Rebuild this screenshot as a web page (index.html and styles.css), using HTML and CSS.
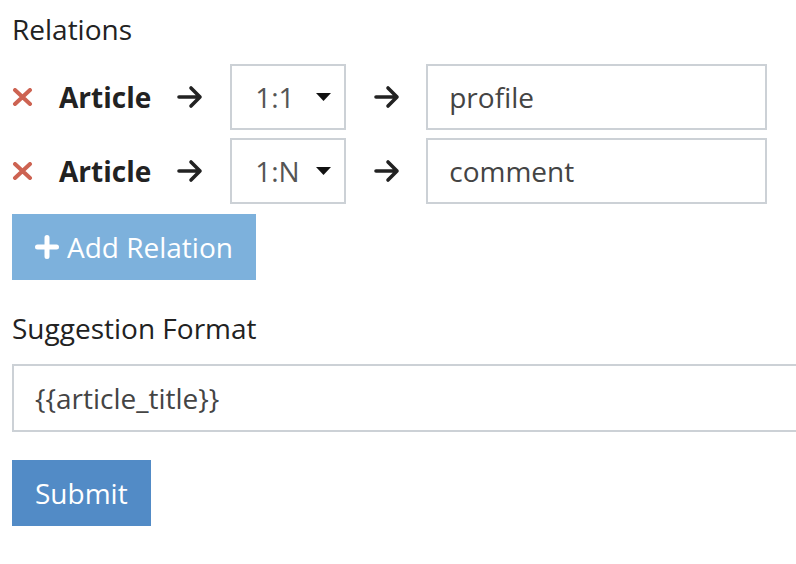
FILE: index.html
```html
<!DOCTYPE html>
<html>
<head>
<meta charset="utf-8">
<link rel="stylesheet" href="styles.css">
</head>
<body>
<div class="form">
  <div class="label first">Relations</div>
  <div class="rel-row">
    <svg class="x-icon" width="21" height="18" viewBox="0 0 21 18"><path d="M3 2 L18 16 M18 2 L3 16" stroke="#cd6352" stroke-width="4" stroke-linecap="round"/></svg>
    <span class="entity">Article</span>
    <svg class="arrow" width="26" height="24" viewBox="0 0 26 24"><path d="M2 12 H23 M14 3 L23 12 L14 21" fill="none" stroke="#222" stroke-width="3.6" stroke-linecap="round" stroke-linejoin="round"/></svg>
    <div class="select"><span>1:1</span><svg class="caret" width="15" height="8" viewBox="0 0 15 8"><polygon points="0,0 15,0 7.5,8" fill="#111"/></svg></div>
    <svg class="arrow arrow-2" width="26" height="24" viewBox="0 0 26 24"><path d="M2 12 H23 M14 3 L23 12 L14 21" fill="none" stroke="#222" stroke-width="3.6" stroke-linecap="round" stroke-linejoin="round"/></svg>
    <input class="text-input" type="text" value="profile">
  </div>
  <div class="rel-row second">
    <svg class="x-icon" width="21" height="18" viewBox="0 0 21 18"><path d="M3 2 L18 16 M18 2 L3 16" stroke="#cd6352" stroke-width="4" stroke-linecap="round"/></svg>
    <span class="entity">Article</span>
    <svg class="arrow" width="26" height="24" viewBox="0 0 26 24"><path d="M2 12 H23 M14 3 L23 12 L14 21" fill="none" stroke="#222" stroke-width="3.6" stroke-linecap="round" stroke-linejoin="round"/></svg>
    <div class="select"><span>1:N</span><svg class="caret" width="15" height="8" viewBox="0 0 15 8"><polygon points="0,0 15,0 7.5,8" fill="#111"/></svg></div>
    <svg class="arrow arrow-2" width="26" height="24" viewBox="0 0 26 24"><path d="M2 12 H23 M14 3 L23 12 L14 21" fill="none" stroke="#222" stroke-width="3.6" stroke-linecap="round" stroke-linejoin="round"/></svg>
    <input class="text-input" type="text" value="comment">
  </div>
  <button class="btn btn-add" type="button"><svg class="plus" width="24" height="24" viewBox="0 0 24 24"><path d="M12 2.5 V21.5 M2.5 12 H21.5" stroke="#fff" stroke-width="5" stroke-linecap="round"/></svg><span>Add Relation</span></button>
  <div class="label section">Suggestion Format</div>
  <input class="text-input wide" type="text" value="{{article_title}}">
  <div class="actions"><button class="btn btn-submit" type="submit">Submit</button></div>
</div>
</body>
</html>
```

FILE: styles.css
```css
html, body {
  margin: 0;
  padding: 0;
  background: #fff;
  overflow: hidden;
}
body {
  font-family: "Open Sans", "Liberation Sans", sans-serif;
  font-size: 28px;
  color: #222;
}
.form {
  padding-left: 12px;
}
.label {
  line-height: 40px;
  color: #222;
}
.label.first {
  margin-top: 9px;
  margin-bottom: 15px;
}
.label.section {
  margin-top: 28px;
  margin-bottom: 16px;
}
.rel-row {
  display: flex;
  align-items: center;
  gap: 26px;
  height: 66px;
}
.rel-row.second {
  margin-top: 8px;
}
.x-icon, .arrow {
  flex: none;
  display: block;
}
.arrow-2 {
  margin-left: 2px;
}
.entity {
  font-weight: 700;
  color: #222;
  line-height: 40px;
}
.select {
  box-sizing: border-box;
  flex: none;
  width: 116px;
  height: 66px;
  border: 2px solid #ccd1d6;
  display: flex;
  align-items: center;
  padding-left: 23px;
  color: #555;
  margin-left: 1px;
}
.select span {
  width: 61px;
}
.caret {
  display: block;
}
.text-input {
  box-sizing: border-box;
  flex: none;
  height: 66px;
  width: 341px;
  border: 2px solid #ccd1d6;
  border-radius: 0;
  padding: 0 21px;
  margin: 0;
  font-family: "Open Sans", "Liberation Sans", sans-serif;
  font-size: 28px;
  color: #444;
  background: #fff;
  outline: none;
}
.text-input.wide {
  display: block;
  width: 800px;
  height: 68px;
}
.btn {
  box-sizing: border-box;
  height: 66px;
  border: none;
  border-radius: 0;
  padding: 0 23px;
  margin: 0;
  font-family: "Open Sans", "Liberation Sans", sans-serif;
  font-size: 28px;
  color: #fff;
  display: flex;
  align-items: center;
}
.btn-add {
  margin-top: 10px;
  background: #7db1dc;
  gap: 8px;
}
.plus {
  display: block;
}
.actions {
  margin-top: 28px;
}
.btn-submit {
  background: #528bc6;
}
```
